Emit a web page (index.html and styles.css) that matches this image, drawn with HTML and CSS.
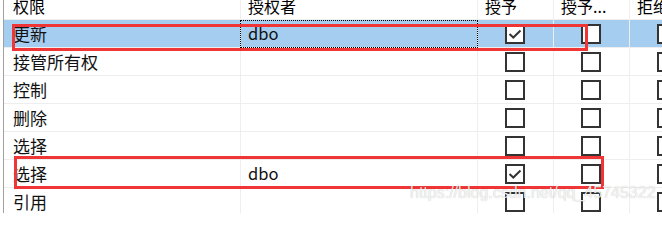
FILE: index.html
```html
<!DOCTYPE html>
<html lang="zh-CN">
<head>
<meta charset="utf-8">
<title>权限</title>
<link rel="stylesheet" href="styles.css">
</head>
<body>
<div class="viewport">
  <div class="grid">
    <div class="row head">
      <div class="cell c1">权限</div>
      <div class="cell c2">授权者</div>
      <div class="cell c3">授予</div>
      <div class="cell c4">授予...</div>
      <div class="cell c5">拒绝</div>
    </div>
    <div class="row selected">
      <div class="cell c1">更新</div>
      <div class="cell c2 focus">dbo</div>
      <div class="cell c3"><span class="box checked"><svg viewBox="0 0 16 16" width="16" height="16"><path d="M2.5 8 L6.3 11.5 L13.5 4.5" fill="none" stroke="#333" stroke-width="2"/></svg></span></div>
      <div class="cell c4"><span class="box"></span></div>
      <div class="cell c5"><span class="box"></span></div>
    </div>
    <div class="row">
      <div class="cell c1">接管所有权</div>
      <div class="cell c2"></div>
      <div class="cell c3"><span class="box"></span></div>
      <div class="cell c4"><span class="box"></span></div>
      <div class="cell c5"><span class="box"></span></div>
    </div>
    <div class="row">
      <div class="cell c1">控制</div>
      <div class="cell c2"></div>
      <div class="cell c3"><span class="box"></span></div>
      <div class="cell c4"><span class="box"></span></div>
      <div class="cell c5"><span class="box"></span></div>
    </div>
    <div class="row">
      <div class="cell c1">删除</div>
      <div class="cell c2"></div>
      <div class="cell c3"><span class="box"></span></div>
      <div class="cell c4"><span class="box"></span></div>
      <div class="cell c5"><span class="box"></span></div>
    </div>
    <div class="row">
      <div class="cell c1">选择</div>
      <div class="cell c2"></div>
      <div class="cell c3"><span class="box"></span></div>
      <div class="cell c4"><span class="box"></span></div>
      <div class="cell c5"><span class="box"></span></div>
    </div>
    <div class="row">
      <div class="cell c1">选择</div>
      <div class="cell c2">dbo</div>
      <div class="cell c3"><span class="box checked"><svg viewBox="0 0 16 16" width="16" height="16"><path d="M2.5 8 L6.3 11.5 L13.5 4.5" fill="none" stroke="#333" stroke-width="2"/></svg></span></div>
      <div class="cell c4"><span class="box"></span></div>
      <div class="cell c5"><span class="box"></span></div>
    </div>
    <div class="row">
      <div class="cell c1">引用</div>
      <div class="cell c2"></div>
      <div class="cell c3"><span class="box"></span></div>
      <div class="cell c4"><span class="box"></span></div>
      <div class="cell c5"><span class="box"></span></div>
    </div>
  </div>
  <div class="mark mark-1"></div>
  <div class="mark mark-2"></div>
  <div class="watermark">https://blog.csdn.net/qq_45745322</div>
</div>
</body>
</html>
```
FILE: styles.css
```css
html, body {
  margin: 0;
  padding: 0;
  background: #fff;
  overflow: hidden;
  width: 662px;
  height: 213px;
}

.viewport {
  position: relative;
  width: 662px;
  height: 213px;
  overflow: hidden;
  padding-left: 3px;
  box-sizing: border-box;
}

.grid {
  width: 703px;
  margin-top: -8px;
  border-left: 1px solid #a0a0a0;
  font-family: "Noto Sans CJK SC", "Noto Sans", sans-serif;
  color: #111;
}

.row {
  display: grid;
  grid-template-columns: 237px 237px 76px 76px 76px;
  height: 28px;
}

.cell {
  box-sizing: border-box;
  height: 28px;
  border-right: 1px solid #eeeeee;
  border-bottom: 1px solid #eeeeee;
  display: flex;
  align-items: center;
  font-size: 17px;
  line-height: 1;
  position: relative;
}

.c1 { padding-left: 9px; }
.c2 { padding-left: 7px; font-size: 16.5px; }
.c3, .c4, .c5 { justify-content: center; }

.head .cell {
  font-size: 16px;
  color: #000;
  justify-content: flex-start;
  padding-left: 7px;
  padding-top: 1px;
}
.head .c1 { padding-left: 9px; }

.selected .cell {
  background: #a5cdf0;
}

.focus::after {
  content: "";
  position: absolute;
  left: -1px;
  top: 0;
  right: -1px;
  bottom: -1px;
  border: 1px dotted #000;
}

.box {
  box-sizing: border-box;
  width: 20px;
  height: 20px;
  border: 2px solid #333;
  background: #fff;
  display: flex;
  align-items: center;
  justify-content: center;
  margin-right: 1px;
}
.box svg { display: block; }

.mark {
  position: absolute;
  box-sizing: border-box;
  border: 3px solid #ef3535;
}
.mark-1 {
  left: 12px;
  top: 24px;
  width: 576px;
  height: 27px;
}
.mark-2 {
  left: 14px;
  top: 156px;
  width: 590px;
  height: 33px;
}

.watermark {
  position: absolute;
  left: 410px;
  top: 184px;
  font-family: "Liberation Sans", Arial, sans-serif;
  font-size: 16px;
  color: rgba(250, 250, 250, 0.9);
  text-shadow: 0 0 1px rgba(0, 0, 0, 0.28);
  white-space: nowrap;
}
```
